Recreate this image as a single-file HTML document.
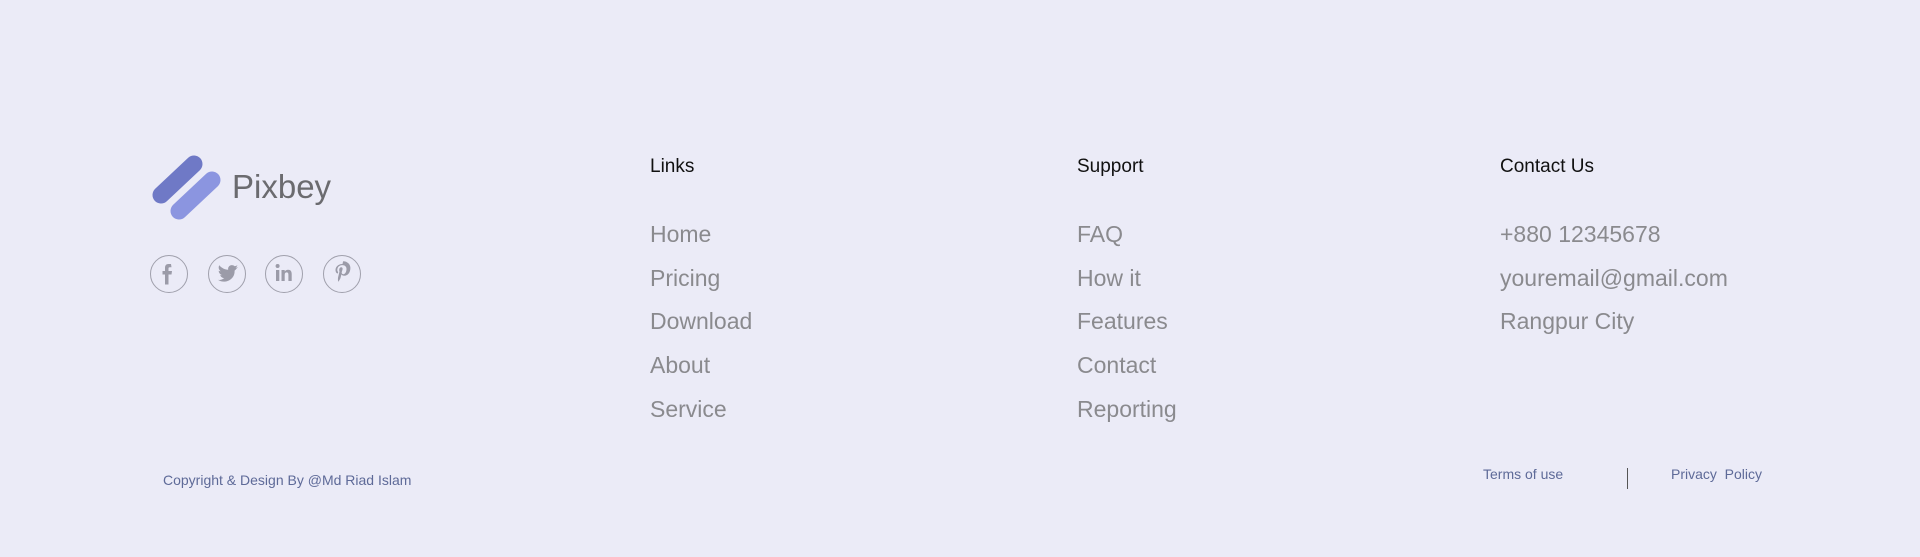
<!DOCTYPE html>
<html><head><meta charset="utf-8"><style>
html,body{margin:0;padding:0;}
body{width:1920px;height:557px;background:#ebebf7;position:relative;overflow:hidden;font-family:"Liberation Sans",sans-serif;}
.a{position:absolute;white-space:nowrap;}
.h{font-size:19px;color:#111;}
.i{font-size:23px;color:#8a8a8e;}
.s{font-size:14px;color:#5e6a98;}
</style></head><body>
<svg class="a" style="left:0;top:0" width="400" height="300">
<line x1="194" y1="164" x2="161" y2="195" stroke="#6f79c6" stroke-width="17" stroke-linecap="round"/>
<line x1="212" y1="180" x2="179" y2="211" stroke="#8b95e0" stroke-width="17" stroke-linecap="round"/>
<g fill="none" stroke="#a0a0ac" stroke-width="1">
<circle cx="169" cy="274" r="18.5"/><circle cx="227" cy="274" r="18.5"/><circle cx="284" cy="274" r="18.5"/><circle cx="342" cy="274" r="18.5"/>
</g>
<path d="M171 264h-2.5c-2.5 0-3.5 1.5-3.5 4v3h-2.5v3.5h2.5v10h3.5v-10h3l.5-3.5h-3.5v-2.5c0-1 .5-1.3 1.3-1.3h1.7z" fill="#9b9ba8"/>
<path d="M238 267c-.8.4-1.6.6-2.5.7.9-.5 1.6-1.4 1.9-2.4-.8.5-1.8.8-2.7 1-1.8-1.9-5-1.5-6.2.8-.4.8-.5 1.8-.3 2.7-3.5-.2-6.7-1.8-8.9-4.5-1.2 2-.6 4.6 1.4 5.9-.7 0-1.4-.2-2-.5 0 2.1 1.5 3.9 3.5 4.3-.6.2-1.3.2-2 .1.6 1.8 2.2 3 4.1 3-1.8 1.4-4 2.1-6.3 1.8 7 4.5 16.8-.2 16.6-8.8v-.5c.8-.6 1.5-1.3 2-2.1z" fill="#9b9ba8"/>
<rect x="276" y="270" width="3.3" height="11" fill="#9b9ba8"/><circle cx="277.6" cy="266" r="2" fill="#9b9ba8"/>
<path d="M281.5 281v-11h3.2v1.5c.7-1.2 2-1.8 3.4-1.8 2.5 0 3.6 1.6 3.6 4.3v7h-3.3v-6.3c0-1.5-.5-2.3-1.7-2.3-1.3 0-2 .9-2 2.5v6.1z" fill="#9b9ba8"/>
<path d="M342.5 264c-5 0-7 3.5-7 6 0 1.6.6 3 1.9 3.5.2.1.4 0 .5-.2l.2-.8c.1-.2 0-.4-.1-.6-.4-.5-.7-1.1-.7-2 0-2.6 1.9-4.8 5-4.8 2.7 0 4.2 1.6 4.2 3.8 0 2.9-1.3 5.3-3.2 5.3-1 0-1.8-.9-1.6-1.9.3-1.3.9-2.7.9-3.6 0-.8-.4-1.5-1.4-1.5-1.1 0-2 1.2-2 2.7 0 1 .3 1.6.3 1.6l-1.4 5.7c-.3 1.5-.1 3.4 0 4.3 0 .1.2.2.3.1.1-.2 1.7-2.1 2.2-4l.8-3.2c.4.8 1.6 1.4 2.8 1.4 3.7 0 6.2-3.4 6.2-7.9 0-3.4-2.9-6.6-7.3-6.6z" fill="#9b9ba8"/>
</svg>
<div class="a" style="left:232px;top:168px;font-size:33px;color:#6b6b6f;">Pixbey</div>

<div class="a h" style="left:650px;top:156px;">Links</div>
<div class="a i" style="left:650px;top:221px;">Home</div>
<div class="a i" style="left:650px;top:265px;">Pricing</div>
<div class="a i" style="left:650px;top:308px;">Download</div>
<div class="a i" style="left:650px;top:352px;">About</div>
<div class="a i" style="left:650px;top:396px;">Service</div>

<div class="a h" style="left:1077px;top:156px;">Support</div>
<div class="a i" style="left:1077px;top:221px;">FAQ</div>
<div class="a i" style="left:1077px;top:265px;">How it</div>
<div class="a i" style="left:1077px;top:308px;">Features</div>
<div class="a i" style="left:1077px;top:352px;">Contact</div>
<div class="a i" style="left:1077px;top:396px;">Reporting</div>

<div class="a h" style="left:1500px;top:156px;">Contact Us</div>
<div class="a i" style="left:1500px;top:221px;">+880 12345678</div>
<div class="a i" style="left:1500px;top:265px;">youremail@gmail.com</div>
<div class="a i" style="left:1500px;top:308px;">Rangpur City</div>

<div class="a s" style="left:163px;top:472px;">Copyright &amp; Design By @Md Riad Islam</div>
<div class="a s" style="left:1483px;top:466px;">Terms of use</div>
<div class="a" style="left:1627px;top:468px;width:1px;height:21px;background:#555;"></div>
<div class="a s" style="left:1671px;top:466px;">Privacy&nbsp; Policy</div>
</body></html>
